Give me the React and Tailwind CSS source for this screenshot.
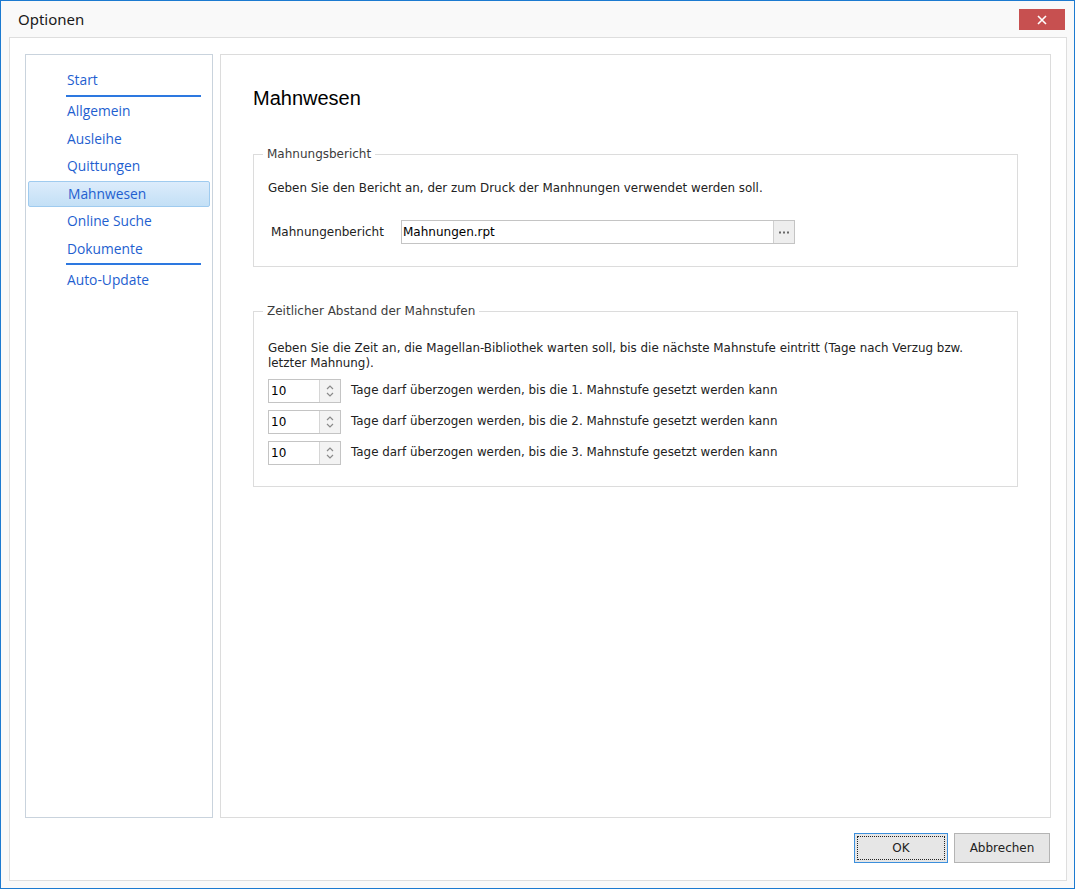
const NAV = [
  { label: 'Start', lineAfter: true },
  { label: 'Allgemein' },
  { label: 'Ausleihe' },
  { label: 'Quittungen' },
  { label: 'Mahnwesen', active: true },
  { label: 'Online Suche' },
  { label: 'Dokumente', lineAfter: true },
  { label: 'Auto-Update' },
];

const STUFEN = [1, 2, 3];

const Spinner = ({ value }) => (
  <div className="flex h-[24px] w-[73px] border border-[#c4c4c4] bg-white">
    <div className="flex flex-1 items-center pl-[2px] text-[12px] text-black">{value}</div>
    <div className="flex w-[21px] flex-col items-center justify-center border-l border-[#d6d6d6] bg-[#f3f3f3]">
      <svg width="8" height="14" viewBox="0 0 8 14" fill="none" stroke="#8a8a8a" strokeWidth="1.2">
        <path d="M1 5 L4 2 L7 5" />
        <path d="M1 9 L4 12 L7 9" />
      </svg>
    </div>
  </div>
);

const GroupBox = ({ title, className = '', children }) => (
  <fieldset className={`border border-[#dcdcdc] px-[14px] ${className}`}>
    <legend className="ml-[-5px] px-[4px] text-[12px] leading-[14px] text-[#3c3c3c]">{title}</legend>
    {children}
  </fieldset>
);

export default function App() {
  return (
    <div
      className="flex h-[889px] w-[1075px] flex-col border border-[#1c7ad0] bg-[#f9f9f9]"
      style={{ fontFamily: 'Tahoma, "DejaVu Sans", sans-serif' }}
    >
      {/* title bar */}
      <div className="flex h-[36px] items-start justify-between">
        <span
          className="ml-[17px] mt-[8px] text-[15px] leading-[20px] text-[#1a1a1a]"
          style={{ fontFamily: '"Noto Sans", "Open Sans", sans-serif' }}
        >
          Optionen
        </span>
        <button className="mr-[9px] mt-[8px] flex h-[21px] w-[46px] items-center justify-center bg-[#c75050]">
          <svg width="10" height="10" viewBox="0 0 10 10" stroke="white" strokeWidth="1.6">
            <path d="M1 1 L9 9 M9 1 L1 9" />
          </svg>
        </button>
      </div>

      {/* frame */}
      <div className="mb-[7px] ml-[8px] mr-[7px] flex flex-1 flex-col border border-[#dedede] bg-white px-[15px] pt-[16px]">
        <div className="flex h-[764px] gap-[7px]">
          {/* nav */}
          <div
            className="flex w-[188px] flex-col border border-[#c9d3dd] pt-[12px]"
            style={{ fontFamily: '"Open Sans", "Noto Sans", sans-serif' }}
          >
            {NAV.map((item) => (
              <div key={item.label} className="flex flex-col">
                <div className="mx-[2px] flex h-[27.5px] items-center">
                  <div
                    className={`flex h-[26px] w-full items-center rounded-[2px] pl-[39px] text-[13.8px] text-[#1f5fd0] ${
                      item.active
                        ? 'border border-[#9fcbef] bg-gradient-to-b from-[#dcecfb] to-[#c3e0f6] pl-[37px]'
                        : ''
                    }`}
                  >
                    {item.label}
                  </div>
                </div>
                {item.lineAfter && <div className="mb-[1.5px] ml-[40px] h-[2px] w-[135px] bg-[#2d78e0]" />}
              </div>
            ))}
          </div>

          {/* content */}
          <div className="flex flex-1 flex-col border border-[#dcdcdc] px-[32px]">
            <h1
              className="mt-[31px] text-[20px] leading-[24px] text-black"
              style={{ fontFamily: '"Liberation Sans", Arial, sans-serif' }}
            >
              Mahnwesen
            </h1>

            <GroupBox title="Mahnungsbericht" className="mt-[37px] h-[120px]">
              <p className="mt-[20px] text-[11.9px] leading-[15px] text-[#222]">
                Geben Sie den Bericht an, der zum Druck der Manhnungen verwendet werden soll.
              </p>
              <div className="mt-[24px] flex items-center">
                <span className="ml-[3px] w-[130px] text-[12px] text-[#222]">Mahnungenbericht</span>
                <div className="flex h-[24px] w-[394px] border border-[#c4c4c4]">
                  <div className="flex flex-1 items-center pl-[1px] text-[12px] text-black">Mahnungen.rpt</div>
                  <div className="flex w-[21px] items-center justify-center border-l border-[#cfcfcf] bg-[#eeeeee]">
                    <svg width="10" height="3" viewBox="0 0 10 3" fill="#6a6a6a">
                      <rect x="0" y="0.5" width="2" height="2" />
                      <rect x="4" y="0.5" width="2" height="2" />
                      <rect x="8" y="0.5" width="2" height="2" />
                    </svg>
                  </div>
                </div>
              </div>
            </GroupBox>

            <GroupBox title="Zeitlicher Abstand der Mahnstufen" className="mt-[37px] h-[183px]">
              <p className="mt-[23px] text-[11.9px] leading-[15px] text-[#222]">
                Geben Sie die Zeit an, die Magellan-Bibliothek warten soll, bis die nächste Mahnstufe eintritt (Tage nach
                Verzug bzw. letzter Mahnung).
              </p>
              <div className="mt-[8px] flex flex-col gap-[7px]">
                {STUFEN.map((n) => (
                  <div key={n} className="flex items-center gap-[10px]">
                    <Spinner value="10" />
                    <span className="text-[11.9px] text-[#222]">
                      Tage darf überzogen werden, bis die {n}. Mahnstufe gesetzt werden kann
                    </span>
                  </div>
                ))}
              </div>
            </GroupBox>
          </div>
        </div>

        {/* buttons */}
        <div className="mt-[15px] flex justify-end gap-[6px] pr-[1px]">
          <button className="flex h-[30px] w-[94px] items-center justify-center border border-[#3c8fdc] bg-[#e6e6e6] p-[2px]">
            <span className="flex h-full w-full items-center justify-center border border-dotted border-[#222] text-[12px] text-[#222]">
              OK
            </span>
          </button>
          <button className="h-[30px] w-[96px] border border-[#b4b4b4] bg-[#e6e6e6] text-[12px] text-[#222]">
            Abbrechen
          </button>
        </div>
      </div>
    </div>
  );
}
